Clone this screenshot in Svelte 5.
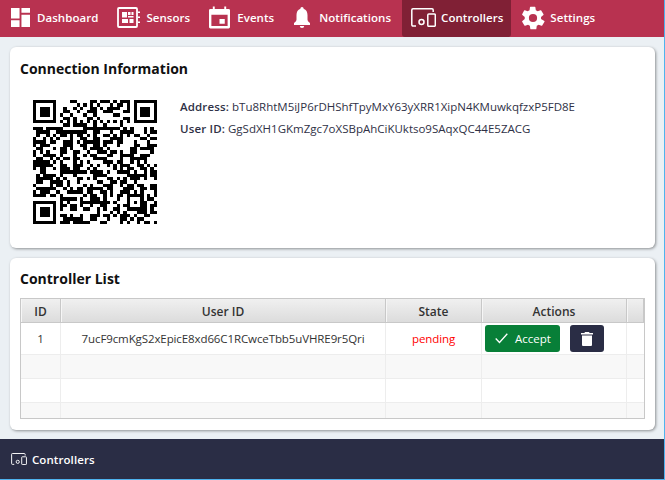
<script>
  const navItems = [
    { label: 'Dashboard', icon: 'dash' },
    { label: 'Sensors', icon: 'sensor' },
    { label: 'Events', icon: 'event' },
    { label: 'Notifications', icon: 'bell' },
    { label: 'Controllers', icon: 'ctrl', active: true },
    { label: 'Settings', icon: 'gear' }
  ];

  // QR matrix: fixed patterns plus seeded data modules
  const SIZE = 37;
  let seed = 20240611;
  function rnd() {
    seed = (seed + 0x6d2b79f5) | 0;
    let t = Math.imul(seed ^ (seed >>> 15), 1 | seed);
    t = (t + Math.imul(t ^ (t >>> 7), 61 | t)) ^ t;
    return ((t ^ (t >>> 14)) >>> 0) / 4294967296;
  }
  const m = Array.from({ length: SIZE }, () => Array.from({ length: SIZE }, () => (rnd() < 0.5 ? 1 : 0)));
  function finder(ox, oy) {
    for (let y = -1; y <= 7; y++) for (let x = -1; x <= 7; x++) {
      const X = ox + x, Y = oy + y;
      if (X < 0 || Y < 0 || X >= SIZE || Y >= SIZE) continue;
      const inRing = x >= 0 && x <= 6 && y >= 0 && y <= 6 && (x === 0 || x === 6 || y === 0 || y === 6);
      const inCore = x >= 2 && x <= 4 && y >= 2 && y <= 4;
      m[Y][X] = inRing || inCore ? 1 : 0;
    }
  }
  finder(0, 0); finder(30, 0); finder(0, 30);
  for (let i = 8; i < 29; i++) { m[6][i] = i % 2 ? 0 : 1; m[i][6] = i % 2 ? 0 : 1; }
  for (let y = 0; y < 5; y++) for (let x = 0; x < 5; x++) {
    m[28 + y][28 + x] = x === 0 || x === 4 || y === 0 || y === 4 || (x === 2 && y === 2) ? 1 : 0;
  }
  const qrPath = m.map((row, y) =>
    row.map((c, x) => (c ? `M${x} ${y}h1v1h-1z` : '')).join('')
  ).join('');
  const rowsBelow = ['r2', 'r3', 'r4'];
</script>

{#snippet icon(name)}
  {#if name === 'dash'}
    <svg class="ico" viewBox="0 0 20 20"><path d="M0 0h9v11H0zM11 0h9v5h-9zM11 7h9v13h-9zM0 13h9v7H0z" fill="currentColor"/></svg>
  {:else if name === 'sensor'}
    <svg class="ico" viewBox="0 0 23 21"><path fill="none" stroke="currentColor" stroke-width="1.800" d="M2 1h17a1 1 0 0 1 1 1v17a1 1 0 0 1-1 1H2a1 1 0 0 1-1-1V2a1 1 0 0 1 1-1z"/><path fill="currentColor" d="M5 5h5v5.500H5zM11 5h2.500v3H11zM14.500 5h2v3h-2zM11 9h5.500v1.500H11zM5 12h6v4H5zM12.500 12h4v4h-4zM21 4.500h2V6h-2zM21 9.500h2V11h-2zM21 14.500h2V16h-2z"/></svg>
  {:else if name === 'event'}
    <svg class="ico" viewBox="0 0 22 23"><path fill="currentColor" fill-rule="evenodd" d="M4 0h2v2.500h10V0h2v2.500h2.500A1.500 1.500 0 0 1 22 4v17.500a1.500 1.500 0 0 1-1.500 1.500h-19A1.500 1.500 0 0 1 0 21.500V4a1.500 1.500 0 0 1 1.500-1.500H4zM2.500 8.500V20.500h17V8.500zM11 13h5.500v5H11z"/></svg>
  {:else if name === 'bell'}
    <svg class="ico" viewBox="0 0 16 21"><path fill="currentColor" d="M8 0a1.600 1.600 0 0 1 1.600 1.700C12.300 2.500 13.500 5 13.500 8v4.500c0 1.500 1.200 2.600 2.500 3.500v2H0v-2c1.300-.9 2.500-2 2.500-3.500V8c0-3 1.200-5.500 3.900-6.300A1.600 1.600 0 0 1 8 0zM5.800 19h4.400a2.200 2 0 0 1-4.400 0z"/></svg>
  {:else if name === 'ctrl'}
    <svg class="ico" viewBox="0 0 25 19"><path fill="none" stroke="currentColor" stroke-width="1.500" d="M5 18H2a1.200 1.200 0 0 1-1.200-1.200V2A1.200 1.200 0 0 1 2 .8h19A1.200 1.200 0 0 1 22.200 2v2"/><circle cx="10.500" cy="14" r="2.500" fill="none" stroke="currentColor" stroke-width="1.500"/><rect x="16.800" y="6" width="7.500" height="12.300" rx="1" fill="none" stroke="currentColor" stroke-width="1.500"/></svg>
  {:else if name === 'gear'}
    <svg class="ico" viewBox="0 0 24 24"><path fill="currentColor" d="M19.400 13a7.800 7.800 0 0 0 0-2l2.200-1.700a.6.600 0 0 0 .1-.7l-2.100-3.600a.6.600 0 0 0-.7-.2l-2.600 1a8 8 0 0 0-1.700-1l-.4-2.700a.5.500 0 0 0-.5-.5H9.700a.5.500 0 0 0-.5.500l-.4 2.700a8 8 0 0 0-1.700 1l-2.600-1a.6.600 0 0 0-.7.200L2 8.600a.6.600 0 0 0 .2.700L4.400 11a7.800 7.800 0 0 0 0 2l-2.200 1.700a.6.600 0 0 0-.2.700l2.100 3.600c.1.200.4.300.7.200l2.600-1c.5.400 1.100.7 1.700 1l.4 2.700c0 .3.200.5.500.5h4.600c.3 0 .5-.2.500-.5l.4-2.700a8 8 0 0 0 1.700-1l2.600 1c.3.100.6 0 .7-.2l2.100-3.600a.6.600 0 0 0-.1-.7zM12 15.800a3.800 3.800 0 1 1 0-7.600 3.800 3.800 0 0 1 0 7.600z"/></svg>
  {/if}
{/snippet}

<div class="page">
  <nav class="nav">
    {#each navItems as item}
      <a class="tab {item.icon}" class:active={item.active}>
        {@render icon(item.icon)}
        <span>{item.label}</span>
      </a>
    {/each}
  </nav>

  <main class="main">
    <section class="card info">
      <h2>Connection Information</h2>
      <div class="conn">
        <svg class="qr" viewBox="0 0 37 37" shape-rendering="crispEdges"><path d={qrPath} fill="#000"/></svg>
        <div class="meta">
          <p><b>Address:</b> bTu8RhtM5iJP6rDHShfTpyMxY63yXRR1XipN4KMuwkqfzxP5FD8E</p>
          <p><b>User ID:</b> GgSdXH1GKmZgc7oXSBpAhCiKUktso9SAqxQC44E5ZACG</p>
        </div>
      </div>
    </section>

    <section class="card list">
      <h2>Controller List</h2>
      <div class="grid">
        <div class="row head">
          <div class="cell">ID</div>
          <div class="cell">User ID</div>
          <div class="cell">State</div>
          <div class="cell">Actions</div>
          <div class="cell"></div>
        </div>
        <div class="row first">
          <div class="cell num">1</div>
          <div class="cell">7ucF9cmKgS2xEpicE8xd66C1RCwceTbb5uVHRE9r5Qri</div>
          <div class="cell pending">pending</div>
          <div class="cell actions">
            <button class="accept">
              <svg viewBox="0 0 13 11" width="13" height="11"><path d="M.7 5.500l3.800 4L12.300.7" fill="none" stroke="currentColor" stroke-width="1.300"/></svg>
              <span>Accept</span>
            </button>
            <button class="del" aria-label="Delete">
              <svg viewBox="0 0 12 14" width="12" height="14"><path fill="currentColor" d="M4 0h4l.6 1H12v1.600H0V1h3.400zM1 3.600h10V13a1 1 0 0 1-1 1H2a1 1 0 0 1-1-1z"/></svg>
            </button>
          </div>
          <div class="cell"></div>
        </div>
        {#each rowsBelow as r}
          <div class="row {r}">
            <div class="cell"></div><div class="cell"></div><div class="cell"></div><div class="cell"></div><div class="cell"></div>
          </div>
        {/each}
      </div>
    </section>
  </main>

  <footer class="foot">
    {@render icon('ctrl')}
    <span>Controllers</span>
  </footer>
</div>

<style>
  :global(body) { margin: 0; background: #ebf0f4; }
  .page {
    width: 665px; height: 480px; display: flex; flex-direction: column;
    font-family: "Open Sans", "Noto Sans", sans-serif; font-size: 11.5px; color: #2a2d45;
    overflow: hidden; box-sizing: border-box;
    border-right: 1px solid #4fb3ee; border-bottom: 1px solid #4fb3ee;
  }
  .nav { height: 37px; flex: none; background: #b83250; display: flex; padding-left: 2px; gap: 2px; color: #fff; }
  .tab { display: flex; align-items: center; height: 37px; padding: 0 8px 2px 9px; font-weight: 600; font-size: 11.5px; letter-spacing: .05px; box-sizing: border-box; }
  .tab.active { background: #802035; border-radius: 0 0 3px 3px; }
  .tab.bell, .tab.ctrl { margin-left: 1px; }
  .ico { display: block; flex: none; }
  .dash .ico { width: 19px; height: 19px; margin-right: 7px; }
  .sensor .ico { width: 23px; height: 21px; margin-right: 6px; }
  .event .ico { width: 21px; height: 23px; margin-right: 7px; }
  .bell .ico { width: 16px; height: 21px; margin-right: 9px; }
  .ctrl .ico { width: 25px; height: 19px; margin-right: 5px; }
  .gear .ico { width: 26px; height: 26px; margin-right: 4px; margin-left: -2px; }

  .main { flex: 1; padding: 10px 9px 9px 10px; display: flex; flex-direction: column; gap: 10px; min-height: 0; }
  .card { background: #fff; border-radius: 6px; box-shadow: 1px 1px 3px rgba(0,0,0,.4); padding: 0 10px; box-sizing: border-box; }
  .info { height: 201px; }
  .list { height: 172px; }
  h2 { margin: 0; font-size: 14px; font-weight: 700; color: #111; line-height: 20px; padding-top: 12px; height: 40px; box-sizing: border-box; }
  .list h2 { padding-top: 11px; }
  .conn { display: flex; align-items: flex-start; }
  .qr { width: 124px; height: 124px; margin: 13px 23px 0 13px; flex: none; }
  .meta { padding-top: 12px; font-size: 11.5px; color: #2f3146; }
  .meta p { margin: 0 0 7px; line-height: 15px; }
  .meta b { font-weight: 600; letter-spacing: .15px; }

  .grid { border: 1px solid #c8c8c8; height: 121px; overflow: hidden; box-sizing: border-box; }
  .row { display: grid; grid-template-columns: 40px 325px 96px 145px 1fr; border-bottom: 1px solid #ededed; box-sizing: border-box; }
  .cell { border-right: 1px solid #ededed; display: flex; align-items: center; justify-content: center; box-sizing: border-box; min-width: 0; }
  .cell:last-child { border-right: 0; }
  .head { height: 24px; background: linear-gradient(#f0f0f0, #dcdcdc); border-bottom: 1px solid #c8c8c8; font-weight: 600; font-size: 12px; color: #333; }
  .head .cell { border-right: 1px solid #c8c8c8; box-shadow: inset 1px 0 0 #f6f6f6; padding-top: 1px; }
  .first { height: 32px; letter-spacing: -.1px; font-size: 11.5px; color: #333; }
  .r2 { height: 24px; background: #f8f8f8; }
  .r3 { height: 24px; }
  .r4 { height: 24px; background: #f8f8f8; }
  .pending { color: #f00; }
  .actions { justify-content: flex-start; padding-left: 3px; gap: 10px; }
  button { border: 0; border-radius: 3px; color: #fff; height: 27px; padding: 0; display: flex; align-items: center; justify-content: center; font: inherit; }
  .accept { width: 75px; background: #087f38; gap: 7px; font-size: 11.5px; justify-content: flex-start; padding-left: 10px; box-sizing: border-box; }
  .del { width: 34px; background: #2a2d45; }

  .foot { height: 40px; flex: none; background: #2a2d45; color: #fff; display: flex; align-items: center; padding-left: 11px; font-weight: 600; font-size: 11.5px; letter-spacing: .08px; }
  .foot .ico { width: 16px; height: 12px; margin-right: 5px; }
</style>
